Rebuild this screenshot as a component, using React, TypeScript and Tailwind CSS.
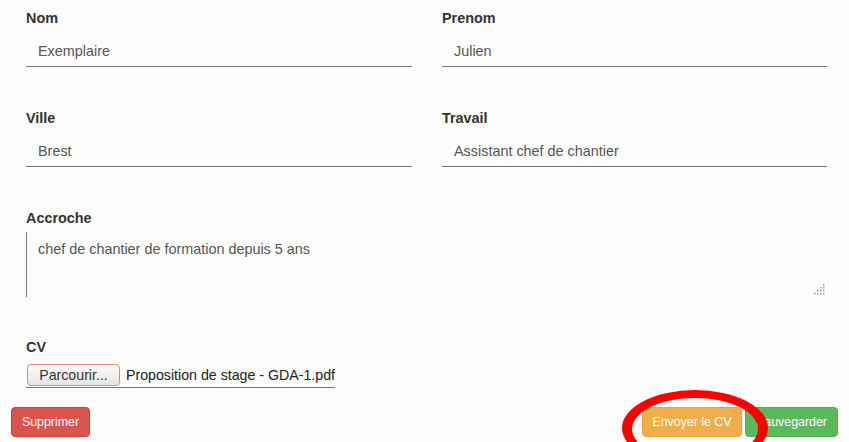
import React from 'react';

const font = { fontFamily: '"Liberation Sans", Arial, sans-serif' };

function Field({ label, value, width }: { label: string; value: string; width: string }) {
  return (
    <div className={width}>
      <label className="block text-[14.4px] leading-[20px] font-bold text-[#333] mb-[5px]">{label}</label>
      <div className="h-[34px] border-b border-[#777] pl-[12px] pt-[2px] flex items-center text-[14.4px] leading-[20px] text-[#555]">
        {value}
      </div>
    </div>
  );
}

function ResizeGrip() {
  const dots: [number, number][] = [
    [3, 0],
    [2, 1], [3, 1],
    [1, 2], [2, 2], [3, 2],
    [0, 3], [1, 3], [2, 3], [3, 3],
  ];
  return (
    <svg width="12" height="12" viewBox="0 0 12 12" className="absolute right-[1px] bottom-[1px]">
      {dots.map(([c, r]) => (
        <rect key={`${c}-${r}`} x={c * 3} y={r * 3} width="1.5" height="1.5" fill="#9a9a9a" />
      ))}
    </svg>
  );
}

export default function App() {
  return (
    <div className="relative w-[849px] h-[442px] overflow-hidden bg-[#fdfdfd]" style={font}>
      {/* Form */}
      <div className="pl-[26px] pt-[8px]">
        <div className="flex gap-[30px]">
          <Field label="Nom" value="Exemplaire" width="w-[386px]" />
          <Field label="Prenom" value="Julien" width="w-[385px]" />
        </div>
        <div className="flex gap-[30px] mt-[41px]">
          <Field label="Ville" value="Brest" width="w-[386px]" />
          <Field label="Travail" value="Assistant chef de chantier" width="w-[385px]" />
        </div>

        <div className="mt-[41px] w-[801px]">
          <label className="block text-[14.4px] leading-[20px] font-bold text-[#333] mb-[4px]">Accroche</label>
          <div className="relative h-[65px] border-l border-[#777] pl-[11px] pt-[7px] text-[14.4px] leading-[20px] text-[#555]">
            chef de chantier de formation depuis 5 ans
            <ResizeGrip />
          </div>
        </div>

        <div className="mt-[40px]">
          <label className="block text-[14.4px] leading-[20px] font-bold text-[#333] mb-[5px]">CV</label>
          <div className="inline-flex items-center h-[26px] border-b border-[#777]">
            <button className="ml-[1px] h-[22px] w-[93px] rounded-[4px] border border-[#e48b6c] bg-gradient-to-b from-[#fbfbfb] to-[#e6e6e6] text-[14.2px] leading-[20px] text-[#333]">
              Parcourir...
            </button>
            <span className="ml-[6px] text-[14.2px] leading-[20px] text-[#222]">Proposition de stage - GDA-1.pdf</span>
          </div>
        </div>
      </div>

      {/* Actions */}
      <div className="flex justify-between items-center px-[11px] mt-[19px]">
        <button className="h-[30px] w-[79px] rounded-[4px] border border-[#d43f3a] bg-[#d9534f] text-white text-[12.4px]">
          Supprimer
        </button>
        <div className="flex gap-[3px]">
          <button className="h-[30px] w-[100px] rounded-[4px] border border-[#eea236] bg-[#f0ad4e] text-white text-[12.4px]">
            Envoyer le CV
          </button>
          <button className="h-[30px] w-[93px] rounded-[4px] border border-[#4cae4c] bg-[#5cb85c] text-white text-[12.4px]">
            Sauvegarder
          </button>
        </div>
      </div>

      {/* Red annotation ring */}
      <svg className="absolute inset-0 pointer-events-none" width="849" height="442" viewBox="0 0 849 442">
        <path
          fillRule="evenodd"
          fill="#ff0000"
          d="M622 428 a73 38 0 1 0 146 0 a73 38 0 1 0 -146 0 Z M632 429 a63 31 0 1 0 126 0 a63 31 0 1 0 -126 0 Z"
        />
      </svg>
    </div>
  );
}
